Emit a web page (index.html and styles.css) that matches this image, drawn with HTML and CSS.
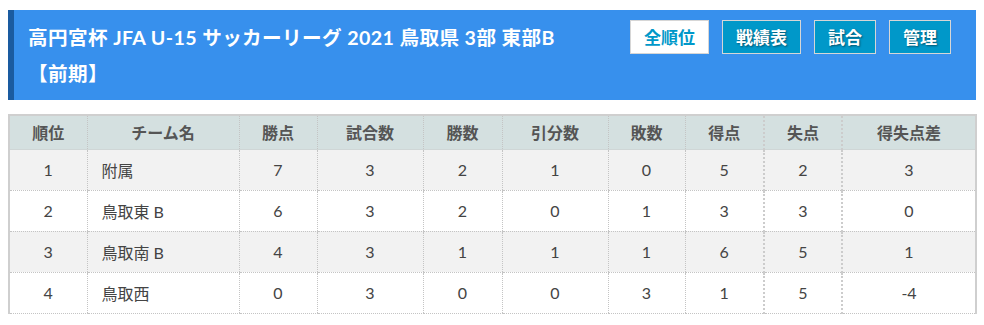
FILE: index.html
```html
<!DOCTYPE html>
<html lang="ja">
<head>
<meta charset="utf-8">
<title>順位表</title>
<link rel="stylesheet" href="styles.css">
</head>
<body>
<div class="page">
  <header class="league-head">
    <h1 class="league-title">高円宮杯 JFA U-15 サッカーリーグ 2021 鳥取県 3部 東部B <span class="nowrap">【前期】</span></h1>
    <nav class="league-nav">
      <a class="nav-btn is-active" href="#">全順位</a>
      <a class="nav-btn" href="#">戦績表</a>
      <a class="nav-btn" href="#">試合</a>
      <a class="nav-btn" href="#">管理</a>
    </nav>
  </header>
  <table class="standings">
    <colgroup>
      <col class="c-rank"><col class="c-team"><col class="c-pts"><col class="c-played"><col class="c-win"><col class="c-draw"><col class="c-loss"><col class="c-gf"><col class="c-ga"><col class="c-gd">
    </colgroup>
    <thead>
      <tr>
        <th>順位</th><th>チーム名</th><th>勝点</th><th>試合数</th><th>勝数</th><th>引分数</th><th>敗数</th><th>得点</th><th class="thick">失点</th><th class="thick">得失点差</th>
      </tr>
    </thead>
    <tbody>
      <tr class="odd"><td>1</td><td class="team">附属</td><td>7</td><td>3</td><td>2</td><td>1</td><td>0</td><td>5</td><td class="thick">2</td><td class="thick">3</td></tr>
      <tr><td>2</td><td class="team">鳥取東 B</td><td>6</td><td>3</td><td>2</td><td>0</td><td>1</td><td>3</td><td class="thick">3</td><td class="thick">0</td></tr>
      <tr class="odd"><td>3</td><td class="team">鳥取南 B</td><td>4</td><td>3</td><td>1</td><td>1</td><td>1</td><td>6</td><td class="thick">5</td><td class="thick">1</td></tr>
      <tr><td>4</td><td class="team">鳥取西</td><td>0</td><td>3</td><td>0</td><td>0</td><td>3</td><td>1</td><td class="thick">5</td><td class="thick">-4</td></tr>
    </tbody>
  </table>
</div>
</body>
</html>
```

FILE: styles.css
```css
* { box-sizing: border-box; }
html, body { margin: 0; padding: 0; background: #fff; }
body {
  font-family: Lato, "Noto Sans CJK JP", sans-serif;
  color: #444;
}
.page { padding: 10px 8px 0 8px; width: 984px; }

.league-head {
  display: flex;
  align-items: flex-start;
  width: 968px;
  background: #3790ed;
  border-left: 6px solid #1a5ba0;
  padding: 10px 25px 9px 14px;
  height: 90px;
}
.league-title {
  flex: 1;
  margin: 0;
  font-size: 19.6px;
  letter-spacing: 0.4px;
  line-height: 36px;
  font-weight: 700;
  color: #fff;
  padding-right: 30px;
}
.nowrap { white-space: nowrap; }
.league-nav {
  display: flex;
  gap: 13px;
}
.nav-btn {
  display: block;
  padding: 0 13px;
  height: 34px;
  line-height: 32px;
  border: 1px solid #d6d6d6;
  background: #0098c9;
  color: #fff;
  font-size: 17px;
  font-weight: 700;
  text-decoration: none;
  text-shadow: 1px 1px 2px rgba(0,0,0,0.45);
  font-family: "Noto Sans CJK JP", sans-serif;
}
.nav-btn.is-active {
  background: #fff;
  color: #0098c9;
  text-shadow: none;
}

.standings {
  margin-top: 14px;
  width: 967px;
  border-collapse: collapse;
  table-layout: fixed;
  border-top: 2px solid #cfcfcf;
  border-left: 2px solid #cfcfcf;
  border-right: 2px solid #cfcfcf;
  font-size: 16px;
}
.c-rank { width: 78px; }
.c-team { width: 152px; }
.c-pts { width: 78px; }
.c-played { width: 106px; }
.c-win { width: 79px; }
.c-draw { width: 106px; }
.c-loss { width: 77px; }
.c-gf { width: 79px; }
.c-ga { width: 78px; }
.c-gd { width: 134px; }

.standings th {
  background: #d4e0e0;
  color: #555;
  font-weight: 700;
  height: 34px;
  padding: 0;
  text-align: center;
  border-left: 1px dotted #c4c4c4;
  border-bottom: 1px solid #cfd6d6;
}
.standings td {
  height: 41px;
  padding: 0;
  text-align: center;
  border-left: 1px dotted #c4c4c4;
  border-bottom: 1px dotted #c4c4c4;
  color: #444;
}
.standings th:first-child, .standings td:first-child { border-left: none; }
.standings .thick { border-left: 2px dotted #cccccc; }
.standings td.team { text-align: left; padding-left: 14px; }
.standings tr.odd td { background: #f2f2f2; }
```
